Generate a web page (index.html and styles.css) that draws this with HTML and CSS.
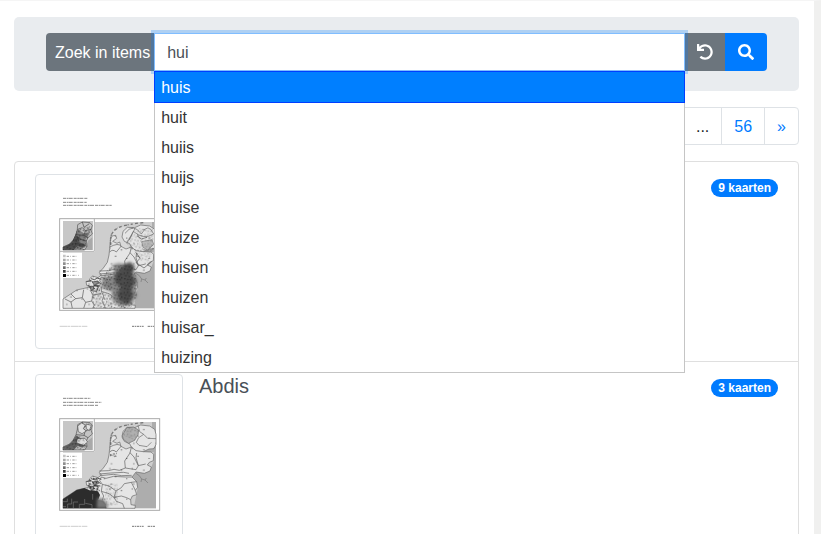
FILE: index.html
```html
<!DOCTYPE html>
<html lang="nl">
<head>
    <meta charset="utf-8">
    <meta name="viewport" content="width=device-width, initial-scale=1">
    <title>Kaarten</title>
    <link rel="stylesheet" href="styles.css">
</head>
<body>
    <!-- shared map drawings -->
    <svg class="defs" width="0" height="0" aria-hidden="true">
        <defs>
            <pattern id="speckle" width="31" height="29" patternUnits="userSpaceOnUse">
                <path d="M2 4h4v3h-4zM12 2h3v5h-3zM22 7h5v3h-5zM7 12h3v4h-3zM17 14h4v3h-4zM26 17h3v5h-3zM3 21h5v3h-5zM13 23h3v4h-3zM20 24h4v3h-4z" fill="#111"/>
                <path d="M0 10l6 3 5-4 4 5 8 1 3-6 5 1M10 29l2-7 6-3 6 3 1 7M18 0l2 5-3 6" fill="none" stroke="#222" stroke-width="1"/>
            </pattern>
            <pattern id="dots" width="67" height="61" patternUnits="userSpaceOnUse">
                <path d="M5 9h3v3h-3zM37 4h3v3h-3zM54 28h4v3h-4zM21 35h3v3h-3zM42 51h3v3h-3z" fill="#222"/>
            </pattern>
            <filter id="soft" x="-20%" y="-20%" width="140%" height="140%">
                <feGaussianBlur stdDeviation="5"/>
            </filter>
            <clipPath id="mapClip"><rect x="99" y="171" width="279" height="259"/></clipPath>
            <path id="landShape" d="M242 222L239 250L237 270L232 292L220 309L208 322L214 330L204 338L188 333L178 342L183 350L168 349L170 361L180 366L163 370L140 375L122 387L99 402V430H315L316 421L303 419L302 404L307 393L320 389L316 376L323 367L320 350L306 336L318 321L343 325L360 318L364 306L352 300L358 292L370 287L371 268L363 261L340 260L357 252L372 251L378 238V208L374 193L359 183L332 180L314 188L292 187L279 199L276 216L283 229L299 236L304 246L288 252L273 244L269 231L261 235L248 229L260 220L257 211L246 213Z"/>
            <symbol id="country" viewBox="15 27 444 525">
                <rect x="99" y="171" width="279" height="259" fill="#cecece"/>
                <path d="M366 171H378V430H311L323 370L306 336L318 321L360 318L371 287V261H340L378 235V208L366 187Z" fill="#adadad"/>
                <path d="M246 205Q252 185 285 185L300 235L305 250L280 280L240 270Z" fill="#d9d9d9"/>
                <use href="#landShape" fill="#e5e5e5" stroke="#666" stroke-width="2"/>
                <path d="M242 240Q239 212 250 200M253 196L263 189M267 187L275 184M282 182L296 179M302 178L308 177M315 176L325 174M331 174L341 173" fill="none" stroke="#777" stroke-width="4" stroke-dasharray="9 2 4 1"/>
                <path d="M239 246Q266 232 273 244M239 261Q248 251 259 261L273 244M304 246L300 264L284 288L286 309L268 316L252 313L235 317L208 318M300 263L312 276L325 302L318 314L286 309M320 264L318 278L325 302M325 302L347 297M340 260L318 257L304 246M214 336L228 340L251 334L286 336L306 336M214 336L209 347L217 358L214 379L221 393L216 408L227 430M217 358L237 363L258 378L274 368L283 356L304 352L320 350M214 379L237 386L252 397L274 393L290 398L302 404M258 378L252 397L259 409L278 416L283 430M304 352L316 376M208 327L242 324L281 322L297 325M211 332L250 328L275 332L305 331" fill="none" stroke="#5d5d5d" stroke-width="2"/>
                <path d="M169 350l14-4 7 7 13-4 9 7M173 361l13 5 8-5 17 2M183 341l11 3 7-5 13 4M184 377l9-15 12 3-5 14z" fill="none" stroke="#555" stroke-width="3"/>
                <path d="M318 325l10 7 7 10 10 3 9 9M335 342l-2 9M345 345l4-6" fill="none" stroke="#777" stroke-width="2"/>
                <path d="M187 351l16-3 3 7-13 6zM178 365l9-2 7 8-10 5z" fill="#909090" stroke="#444" stroke-width="2"/>
                <use href="#landShape" fill="url(#dots)" opacity=".75"/>
            </symbol>
            <symbol id="sheet" viewBox="15 27 444 525">
                <rect x="89" y="161" width="300" height="275" fill="none" stroke="#aaa" stroke-width="3"/>
                <path d="M92 165H195V260H92Z" fill="#fff"/>
                <path d="M193 161V259H89" fill="none" stroke="#b0b0b0" stroke-width="3"/>
                <rect x="99" y="168" width="90" height="87" fill="#c7c7c7"/>
                <path d="M187 178V255H164L174 227L187 217Z" fill="#a9a9a9"/>
                <path d="M143 179L157 171L180 173L187 181L183 195L187 207L174 218L169 228L171 244L164 255H99V246L119 237L129 226L138 209L142 193Z" fill="#c4c4c4" stroke="#555" stroke-width="2"/>
                <path d="M99 246L119 237L129 226L138 211L150 218L145 230L166 239L157 248L143 242L132 255H99Z" fill="#666"/>
                <path d="M143 193L157 188L166 197L183 193M157 171L162 187L178 176M166 197L162 211L174 218M138 209L162 211M129 226L148 222L169 228M119 237L145 236L171 244" fill="none" stroke="#444" stroke-width="2"/>
                <path d="M99 263H156V339H92V263Z" fill="#fff"/>
                <path d="M99 269H107V277H99Z" fill="#c5c5c5"/>
                <path d="M99 281H107V289H99Z" fill="#aaa"/>
                <path d="M99 292H107V300H99Z" fill="#8d8d8d"/>
                <path d="M99 304H107V312H99Z" fill="#6d6d6d"/>
                <path d="M99 315H107V323H99Z" fill="#444"/>
                <path d="M99 327H108V336H99Z" fill="#000"/>
                <path d="M110 274H140M110 285H140M110 296H140M110 308H140M110 319H140M110 331H146" stroke="#999" stroke-width="3" stroke-dasharray="7 3 2 5"/>
                <path d="M89 484H172" stroke="#b5b5b5" stroke-width="2" stroke-dasharray="22 1 8 2"/>
                <path d="M306 484H341M353 484H376" stroke="#777" stroke-width="3" stroke-dasharray="7 2 4 2"/>
            </symbol>
        </defs>
    </svg>

    <main class="page">
        <form class="search-box">
            <div class="input-group">
                <label class="input-label" for="search">Zoek in items</label>
                <div class="search-field">
                    <input type="text" class="search-input" id="search" value="hui" autocomplete="off">
                    <ul class="suggestions">
                        <li class="active">huis</li>
                        <li>huit</li>
                        <li>huiis</li>
                        <li>huijs</li>
                        <li>huise</li>
                        <li>huize</li>
                        <li>huisen</li>
                        <li>huizen</li>
                        <li>huisar_</li>
                        <li>huizing</li>
                    </ul>
                </div>
                <button type="reset" class="btn btn-reset" aria-label="Wissen">
                    <svg class="icon" viewBox="0 0 512 512"><path d="M212.333 224.333H12c-6.627 0-12-5.373-12-12V12C0 5.373 5.373 0 12 0h48c6.627 0 12 5.373 12 12v78.112C117.773 39.279 184.26 7.47 258.175 8.007c136.906.994 246.448 111.623 246.157 248.532C504.041 393.258 393.12 504 256.333 504c-64.089 0-122.496-24.313-166.51-64.215-5.099-4.622-5.334-12.554-.467-17.42l33.967-33.967c4.474-4.474 11.662-4.717 16.401-.525C170.76 415.336 211.58 432 256.333 432c97.268 0 176-78.716 176-176 0-97.267-78.716-176-176-176-58.496 0-110.28 28.476-142.274 72.333h98.274c6.627 0 12 5.373 12 12v48c0 6.627-5.373 12-12 12z"/></svg>
                </button>
                <button type="submit" class="btn btn-search" aria-label="Zoeken">
                    <svg class="icon" viewBox="0 0 512 512"><path d="M505 442.7L405.3 343c-4.5-4.5-10.6-7-17-7H372c27.6-35.3 44-79.7 44-128C416 93.1 322.9 0 208 0S0 93.1 0 208s93.1 208 208 208c48.3 0 92.7-16.4 128-44v16.3c0 6.4 2.5 12.5 7 17l99.7 99.7c9.4 9.4 24.6 9.4 33.9 0l28.3-28.3c9.4-9.4 9.4-24.6.1-34zM208 336c-70.7 0-128-57.2-128-128 0-70.7 57.2-128 128-128 70.7 0 128 57.2 128 128 0 70.7-57.2 128-128 128z"/></svg>
                </button>
            </div>
        </form>

        <ul class="pagination">
            <li><span>...</span></li>
            <li><a href="#">56</a></li>
            <li><a href="#">»</a></li>
        </ul>

        <ul class="items">
            <li class="item">
                <svg class="thumb" viewBox="18 30 438 519" aria-hidden="true">
                    <path d="M99 100H172M99 112H170M99 121H246" stroke="#888" stroke-width="3" stroke-dasharray="9 2 5 1 12 3"/>
                    <use href="#country" x="15" y="27" width="444" height="525"/>
                    <g clip-path="url(#mapClip)">
                        <path d="M215 337L248 334L252 315L246 300L268 294L286 300L300 290L314 302L311 325L322 350L317 377L322 393L302 418L275 425L246 407L246 380L217 370Z" fill="#888" filter="url(#soft)"/>
                        <path d="M258 327L282 297L301 293L312 307L305 331L319 348L303 369L309 390L295 420L269 409L262 386L272 365L253 350Z" fill="#333" opacity=".7" filter="url(#soft)"/>
                        <path d="M215 337L246 300L286 300L314 302L322 350L317 377L322 393L302 430H245V380L217 370Z" fill="url(#speckle)" opacity=".6"/>
                        <path d="M180 366L214 345L217 380L246 390V430H190Z" fill="url(#speckle)" opacity=".6"/>
                        <path d="M105 402l18 9 4 19M123 387l14 14-14 10M137 401l20-3 4-24M157 398l10 14-6 18M167 412l18-4 8 12-5 10M185 408l4-18-9-15M189 390l24-4" fill="none" stroke="#555" stroke-width="2"/>
                        <path d="M285 205Q310 172 334 207Q355 170 371 207Q340 226 310 199L290 235M298 225L315 190" fill="none" stroke="#666" stroke-width="2"/>
                        <path d="M316 260L330 280L318 293L342 309L365 290M322 213l12 9 17-5" fill="none" stroke="#555" stroke-width="2"/>
                        <path d="M335 230L366 224L371 238L353 255L339 247Z" fill="#bbb" stroke="#777" stroke-width="2"/>
                        <path d="M286 230L324 190L369 193L377 240L350 300L318 275Z" fill="url(#speckle)" opacity=".3"/>
                    </g>
                    <use href="#sheet" x="15" y="27" width="444" height="525"/>
                    <path d="M143 193L162 205L181 201L166 225L169 240L157 252L99 255V246L119 237L129 226Z" fill="#333" opacity=".45"/>
                    <path d="M99 246L119 237L129 226L142 193L180 184L183 202L169 228L164 255H99Z" fill="url(#speckle)" opacity=".7"/>
                </svg>
                <span class="badge">9 kaarten</span>
            </li>
            <li class="item">
                <svg class="thumb" viewBox="18 30 438 519" aria-hidden="true">
                    <path d="M99 100H181M99 112H214M99 121H204" stroke="#888" stroke-width="3" stroke-dasharray="9 2 5 1 12 3"/>
                    <use href="#country" x="15" y="27" width="444" height="525"/>
                    <g clip-path="url(#mapClip)">
                        <path d="M277 211L290 188L310 186L326 195L324 209L314 226L295 235L280 223Z" fill="#b0b0b0" stroke="#666" stroke-width="2"/>
                        <path d="M277 211L290 188L310 186L326 195L314 226Z" fill="url(#speckle)" opacity=".3"/>
                        <path d="M319 232L326 218L341 208L329 200L324 181M341 208L353 220L378 221M319 232L327 241L351 245L364 232" fill="none" stroke="#666" stroke-width="2"/>
                        <path d="M99 402L122 387L140 375L163 369L178 376L204 379L210 390L205 405L222 410L230 430H99Z" fill="#2c2c2c"/>
                        <path d="M202 398L219 402L232 416L234 430H200Z" fill="#777" filter="url(#soft)"/>
                        <path d="M99 410h13v-9M113 430v-13h12v-16M130 430v-19h14M148 430v-12h16v-16M166 415l20 4v11M188 404v-17M99 425h9" fill="none" stroke="#777" stroke-width="2"/>
                        <path d="M240 261l12-5 9 9-8 14-13-5z" fill="url(#speckle)"/>
                        <path d="M173 346l22-9 11 8-7 14 9 16-31-3z" fill="url(#speckle)"/>
                        <path d="M225 356h39v65h-39z" fill="url(#speckle)" opacity=".3"/>
                    </g>
                    <use href="#sheet" x="15" y="27" width="444" height="525"/>
                    <path d="M143 183l12-9 11 6-6 11 9 7-13 8-11-6zM168 177l16 4-6 16-9-6zM142 221l23-1 8 11-12 10-21-7z" fill="#e1e1e1" stroke="#555" stroke-width="2"/>
                    <path d="M99 246L119 237L129 226L142 211L160 215L169 242L164 255H99Z" fill="url(#speckle)" opacity=".55"/>
                </svg>
                <h2 class="item-title">Abdis</h2>
                <span class="badge">3 kaarten</span>
            </li>
        </ul>
    </main>
</body>
</html>
```

FILE: styles.css
```css
* {
    box-sizing: border-box;
}
body {
    margin: 0;
    height: 100vh;
    overflow: hidden;
    border-top: 1px solid #f5f5f5;
    border-right: 7px solid #f0f0ef;
    background-color: #fff;
    color: #212529;
    font-family: "Liberation Sans", Arial, sans-serif;
    font-size: 16px;
    line-height: 24px;
}
ul {
    list-style: none;
    margin: 0;
    padding: 0;
}
a {
    color: #007bff;
    text-decoration: none;
}
.defs {
    display: block;
}
.page {
    padding: 16px 15px 0 14px;
}

/* search */
.search-box {
    padding: 16px 32px 20px;
    background-color: #e9ecef;
    border-radius: 5px;
}
.input-group {
    display: flex;
    height: 38px;
}
.input-label {
    padding: 8px 4px 6px 9px;
    background-color: #6c757d;
    color: #fff;
    border-radius: 4px 0 0 4px;
}
.search-field {
    position: relative;
    z-index: 2;
    flex: 1;
}
.search-input {
    display: block;
    width: 100%;
    height: 38px;
    padding: 8px 12px 6px;
    border: 1px solid #80bdff;
    border-radius: 0;
    outline: 0;
    box-shadow: 0 0 0 3px rgba(0, 123, 255, .25);
    background-color: #fff;
    color: #495057;
    font: inherit;
}
.suggestions {
    position: absolute;
    top: 100%;
    left: 0;
    right: 0;
    border: 1px solid #c5c5c5;
    background-color: #fff;
    color: #333;
}
.suggestions li {
    padding: 4px 16px 2px 6px;
    cursor: pointer;
}
.suggestions .active {
    margin: -1px;
    border: 1px solid #003eff;
    background-color: #007fff;
    color: #fff;
}
.btn {
    display: flex;
    align-items: center;
    margin-left: -1px;
    padding: 0 13px;
    border: 0;
    color: #fff;
    cursor: pointer;
}
.btn-reset {
    background-color: #6c757d;
}
.btn-search {
    background-color: #007bff;
    border-radius: 0 4px 4px 0;
}
.icon {
    width: 16px;
    height: 16px;
    fill: currentColor;
}

/* pages */
.pagination {
    display: flex;
    justify-content: flex-end;
    margin: 16px 0;
}
.pagination li {
    margin-left: -1px;
    padding: 9px 12px 7px;
    border: 1px solid #dee2e6;
    line-height: 20px;
}
.pagination li:last-child {
    border-radius: 0 4px 4px 0;
}

/* results */
.items {
    border: 1px solid #dfdfdf;
    border-radius: 4px;
}
.item {
    display: flex;
    align-items: flex-start;
    padding: 12px 20px;
}
.item + .item {
    border-top: 1px solid #dfdfdf;
}
.thumb {
    width: 148px;
    height: 175px;
    border: 1px solid #dee2e6;
    border-radius: 4px;
}
.item-title {
    margin: 0 0 0 16px;
    color: #495057;
    font-size: 20px;
    font-weight: 400;
    line-height: 24px;
}
.badge {
    margin: 5px 0 0 auto;
    padding: 3px 7px;
    border-radius: 9px;
    background-color: #007bff;
    color: #fff;
    font-size: 12px;
    font-weight: 700;
    line-height: 12px;
}
```
